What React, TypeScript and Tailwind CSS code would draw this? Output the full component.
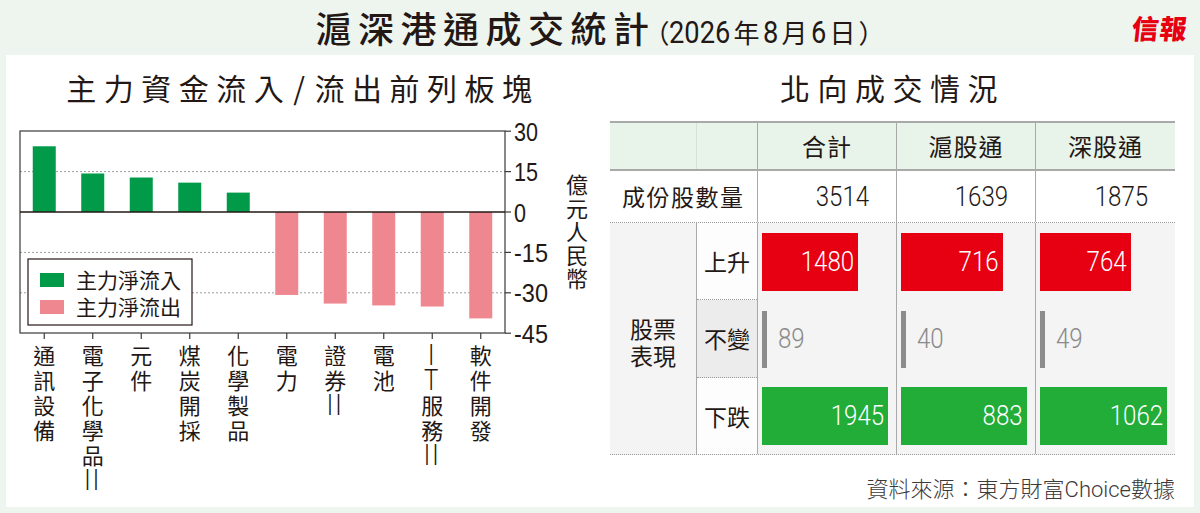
import React from 'react';

const CJK = "font-['Noto_Sans_CJK_TC','Noto_Sans_CJK_SC',sans-serif]";
const NUM = "font-['Roboto','Liberation_Sans',sans-serif]";

type Sector = { label: string[]; v: number };

const sectors: Sector[] = [
  { label: ['通', '訊', '設', '備'], v: 24.4 },
  { label: ['電', '子', '化', '學', '品', 'II'], v: 14.3 },
  { label: ['元', '件'], v: 12.8 },
  { label: ['煤', '炭', '開', '採'], v: 10.9 },
  { label: ['化', '學', '製', '品'], v: 7.2 },
  { label: ['電', '力'], v: -30.8 },
  { label: ['證', '券', 'II'], v: -34.0 },
  { label: ['電', '池'], v: -34.7 },
  { label: ['I', 'T', '服', '務', 'II'], v: -35.1 },
  { label: ['軟', '件', '開', '發'], v: -39.5 },
];

const cols = [
  { name: '合計', count: 3514, up: 1480, flat: 89, down: 1945, w: 'w-[139px]', inner: 126 },
  { name: '滬股通', count: 1639, up: 716, flat: 40, down: 883, w: 'w-[139px]', inner: 126 },
  { name: '深股通', count: 1875, up: 764, flat: 49, down: 1062, w: 'w-[140px]', inner: 127 },
];

function Chart() {
  const L = 14;
  const R = 499;
  const T = 13;
  const B = 215;
  const Z = 94;
  const K = (B - T) / 75;
  const y = (v: number) => Z - v * K;
  const cx = (i: number) => L + 48.5 * (i + 0.5);
  const ticks: { v: number; t: string; w: number }[] = [
    { v: 30, t: '30', w: 24 },
    { v: 15, t: '15', w: 24 },
    { v: 0, t: '0', w: 12 },
    { v: -15, t: '-15', w: 34 },
    { v: -30, t: '-30', w: 34 },
    { v: -45, t: '-45', w: 34 },
  ];
  const sans = "'Liberation Sans', Arial, sans-serif";
  const cjk = "'Noto Sans CJK TC', 'Noto Sans CJK SC', sans-serif";
  return (
    <svg width={594} height={222} viewBox="0 0 594 222" className="block overflow-visible">
      {[15, -15, -30].map((v) => (
        <line key={v} x1={L} x2={R} y1={y(v)} y2={y(v)} stroke="#9d9d9d" strokeWidth={1} strokeDasharray="2 2" />
      ))}
      {sectors.map((s, i) =>
        s.v >= 0 ? (
          <rect key={i} x={cx(i) - 11.5} y={y(s.v)} width={23} height={Z - y(s.v)} fill="#009a48" />
        ) : (
          <rect key={i} x={cx(i) - 11.5} y={Z} width={23} height={y(s.v) - Z} fill="#ef8790" />
        )
      )}
      <rect x={L} y={T} width={R - L} height={B - T} fill="none" stroke="#3a3a3a" strokeWidth={1.2} />
      <line x1={L} x2={R} y1={Z} y2={Z} stroke="#231815" strokeWidth={1.6} />
      {ticks.map((t) => (
        <g key={t.v}>
          <line x1={R} x2={R + 6} y1={y(t.v)} y2={y(t.v)} stroke="#3a3a3a" strokeWidth={1.2} />
          <text
            x={508}
            y={y(t.v) + 9.5}
            fontFamily={sans}
            fontSize={26}
            fill="#231815"
            textLength={t.w}
            lengthAdjust="spacingAndGlyphs"
          >
            {t.t}
          </text>
        </g>
      ))}
      {sectors.map((_, i) => (
        <line key={i} x1={cx(i)} x2={cx(i)} y1={B} y2={B + 6} stroke="#3a3a3a" strokeWidth={1.2} />
      ))}
      <text
        x={571}
        y={56}
        fontFamily={cjk}
        fontSize={22}
        fill="#231815"
        letterSpacing={1.4}
        style={{ writingMode: 'vertical-rl' }}
      >
        億元人民幣
      </text>
      <rect x={22} y={141} width={164} height={66} fill="#ffffff" stroke="#231815" strokeWidth={1.2} />
      <rect x={34} y={155} width={24} height={14} fill="#009a48" />
      <rect x={34} y={182} width={24} height={14} fill="#ef8790" />
      <text x={70} y={170} fontFamily={cjk} fontSize={21} fill="#231815">
        主力淨流入
      </text>
      <text x={70} y={197} fontFamily={cjk} fontSize={21} fill="#231815">
        主力淨流出
      </text>
    </svg>
  );
}

function Num({ children, className = '' }: { children: React.ReactNode; className?: string }) {
  return (
    <span className={`${NUM} inline-block text-[28px] leading-none scale-x-[0.86] ${className}`}>{children}</span>
  );
}

function LeftPanel() {
  return (
    <div className="w-[594px] flex flex-col">
      <div className={`${CJK} h-[63px] flex items-center justify-center text-[30px] tracking-[7.5px] text-[#231815] leading-none`}>
        主力資金流入<span className="mx-[2px]">/</span>流出前列板塊
      </div>
      <Chart />
      <div className={`${CJK} flex pl-[14px] mt-[2px] text-[22px] leading-[25px] text-[#231815]`}>
        {sectors.map((s, i) => (
          <div key={i} className="w-[48.5px] flex flex-col items-center">
            {s.label.map((c, j) =>
              c === 'II' || c === 'I' || c === 'T' ? (
                <span
                  key={j}
                  className="h-[25px] flex items-center font-['Roboto','Liberation_Sans',sans-serif] font-light text-[24px] leading-none tracking-[2px] scale-y-[1.25]"
                >
                  {c}
                </span>
              ) : (
                <span key={j}>{c}</span>
              )
            )}
          </div>
        ))}
      </div>
    </div>
  );
}

function RightPanel() {
  return (
    <div className={`${CJK} w-[594px] pl-[10px] pr-[19px] flex flex-col text-[#231815]`}>
      <div className="h-[63px] flex items-center justify-center text-[30px] tracking-[7.5px] leading-none">北向成交情況</div>
      <div className="w-[565px] mt-[3px]">
        <div className="flex h-[50px] bg-[#e8f3e9] border-y-2 border-[#a9a9a9]">
          <div className="w-[87px] border-r border-[#d6e2d7]" />
          <div className="w-[60px]" />
          {cols.map((c) => (
            <div
              key={c.name}
              className={`${c.w} border-l-[1.5px] border-[#a9a9a9] flex items-center justify-center text-[24px] tracking-[1px]`}
            >
              {c.name}
            </div>
          ))}
        </div>
        <div className="flex h-[52px] bg-white border-b border-dotted border-[#9a9a9a]">
          <div className="w-[147px] flex items-center pl-[12px] text-[23px] tracking-[1.5px]">成份股數量</div>
          {cols.map((c) => (
            <div key={c.name} className={`${c.w} border-l-[1.5px] border-[#a9a9a9] flex items-center justify-end pr-[27px]`}>
              <Num className="font-light origin-right text-[#231815]">{c.count}</Num>
            </div>
          ))}
        </div>
        <div className="flex h-[232px] bg-[#f3f4f3] border-b border-dotted border-[#9a9a9a]">
          <div className="w-[87px] border-r-[1.5px] border-[#a9a9a9] flex items-center justify-center pt-[6px] text-[23px] leading-[27px] text-center">
            股票
            <br />
            表現
          </div>
          <div className="w-[60px] flex flex-col text-[23px]">
            <div className="h-[77px] bg-[#fdfdfd] border-b border-dotted border-[#9a9a9a] flex items-center justify-center">上升</div>
            <div className="h-[78px] bg-[#ececec] border-b border-dotted border-[#9a9a9a] flex items-center justify-center">不變</div>
            <div className="flex-1 bg-[#fdfdfd] flex items-center justify-center">下跌</div>
          </div>
          {cols.map((c) => {
            const max = Math.max(c.up, c.down);
            return (
              <div key={c.name} className={`${c.w} border-l-[1.5px] border-[#a9a9a9] flex flex-col`}>
                <div className="h-[77px] flex items-center pl-[4px]">
                  <div
                    className="h-[58px] bg-[#e60012] flex items-center justify-end pr-[4px]"
                    style={{ width: Math.round((c.up / max) * c.inner) }}
                  >
                    <Num className="font-light origin-right text-white">{c.up}</Num>
                  </div>
                </div>
                <div className="h-[78px] flex items-center pl-[4px]">
                  <div className="w-[5px] h-[57px] bg-[#8c8c8c]" />
                  <Num className="font-light origin-left text-[#8a8a8a] ml-[11px]">{c.flat}</Num>
                </div>
                <div className="flex-1 flex items-center pl-[4px]">
                  <div
                    className="h-[58px] bg-[#22ac38] flex items-center justify-end pr-[4px]"
                    style={{ width: Math.round((c.down / max) * c.inner) }}
                  >
                    <Num className="font-light origin-right text-white">{c.down}</Num>
                  </div>
                </div>
              </div>
            );
          })}
        </div>
        <div className="mt-[17px] text-right text-[22px] leading-[30px] text-[#3e3a39] font-light">
          資料來源：東方財富<span className={`${NUM} font-light`}>Choice</span>數據
        </div>
      </div>
    </div>
  );
}

export default function App() {
  return (
    <div className={`${CJK} w-[1200px] h-[513px] bg-[#eef5ef] flex flex-col overflow-hidden`}>
      <div className="h-[55px] grid grid-cols-[1fr_auto_1fr] items-center">
        <div />
        <div className="flex items-baseline pt-[2px] text-[#231815]">
          <span className="text-[36px] font-medium tracking-[6.5px] leading-none">滬深港通成交統計</span>
          <span className="text-[26px] leading-none ml-[-12px]">（</span>
          <span className="inline-block w-[61px]">
            <span className={`${NUM} inline-block text-[31px] leading-none origin-left scale-x-[0.88]`}>2026</span>
          </span>
          <span className="text-[26px] leading-none mx-[3px]">年</span>
          <span className="inline-block w-[16px]">
            <span className={`${NUM} inline-block text-[31px] leading-none origin-left scale-x-[0.88]`}>8</span>
          </span>
          <span className="text-[26px] leading-none mx-[3px]">月</span>
          <span className="inline-block w-[16px]">
            <span className={`${NUM} inline-block text-[31px] leading-none origin-left scale-x-[0.88]`}>6</span>
          </span>
          <span className="text-[26px] leading-none mx-[3px]">日</span>
          <span className="text-[26px] leading-none">）</span>
        </div>
        <div className="justify-self-end pr-[12px] text-[#e60012] text-[27px] font-black leading-none tracking-[1px] -skew-x-6">
          信報
        </div>
      </div>
      <div className="mx-[6px] h-[452px] bg-white flex">
        <LeftPanel />
        <RightPanel />
      </div>
    </div>
  );
}
